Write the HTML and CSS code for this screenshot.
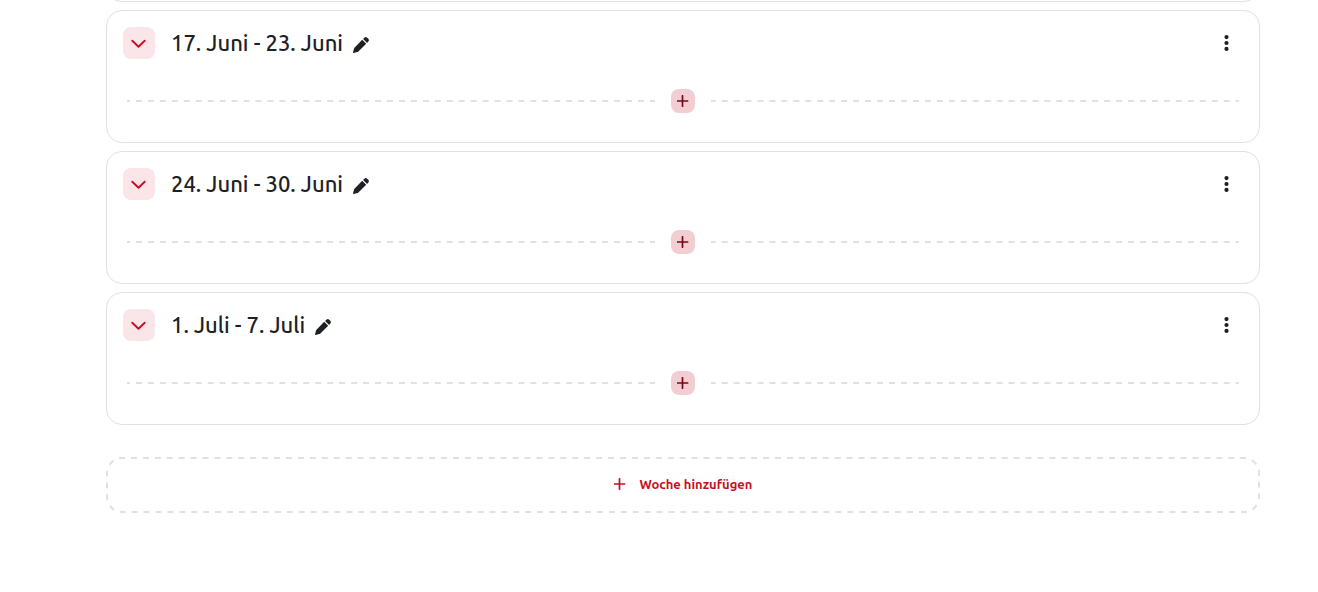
FILE: index.html
```html
<!DOCTYPE html>
<html lang="de">
<head>
    <meta charset="UTF-8">
    <meta name="viewport" content="width=device-width, initial-scale=1.0">
    <title>Kurs bearbeiten</title>
    <link rel="stylesheet" href="styles.css">
</head>
<body>
<svg class="icon-defs" aria-hidden="true">
    <symbol id="icon-chevron" viewBox="0 0 16 16">
        <path d="M1.3 5.7L7.5 11.7L13.7 5.7" fill="none" stroke="currentColor" stroke-width="1.9" stroke-linecap="round" stroke-linejoin="round"/>
    </symbol>
    <symbol id="icon-pencil" viewBox="0 0 16 16">
        <path d="M9.2 2.8L13.2 6.8L5.4 14.4Q4.9 14.9 4.2 15.1L.7 16Q0 16 0 15.3L1 11.8Q1.2 11.1 1.7 10.6Z" fill="currentColor"/>
        <path d="M10.1 1.9L11.4 .7Q12.8-.5 14.2 .7L15.3 1.8Q16.5 3.2 15.3 4.6L14.1 5.9Z" fill="currentColor"/>
    </symbol>
    <symbol id="icon-dots" viewBox="0 0 16 16">
        <circle cx="7.5" cy="2.1" r="2.1" fill="currentColor"/>
        <circle cx="7.5" cy="8" r="2.1" fill="currentColor"/>
        <circle cx="7.5" cy="13.9" r="2.1" fill="currentColor"/>
    </symbol>
    <symbol id="icon-plus" viewBox="0 0 12 12">
        <path d="M5.5 .8V11.2M.6 6H10.6" fill="none" stroke="currentColor" stroke-width="1.7" stroke-linecap="round"/>
    </symbol>
</svg>

<main class="course">
    <section class="section previous" aria-label="Vorherige Woche"></section>

    <section class="section">
        <header class="section-header">
            <button class="toggle" type="button" aria-label="Einklappen"><svg class="icon"><use href="#icon-chevron"/></svg></button>
            <h3 class="title">17. Juni - 23. Juni</h3>
            <button class="edit" type="button" aria-label="Bearbeiten"><svg class="icon"><use href="#icon-pencil"/></svg></button>
            <button class="menu" type="button" aria-label="Aktionen"><svg class="icon"><use href="#icon-dots"/></svg></button>
        </header>
        <div class="divider">
            <span class="divider-content">
                <button class="insert" type="button" aria-label="Inhalt einfügen"><svg class="icon-plus"><use href="#icon-plus"/></svg></button>
            </span>
        </div>
    </section>

    <section class="section">
        <header class="section-header">
            <button class="toggle" type="button" aria-label="Einklappen"><svg class="icon"><use href="#icon-chevron"/></svg></button>
            <h3 class="title">24. Juni - 30. Juni</h3>
            <button class="edit" type="button" aria-label="Bearbeiten"><svg class="icon"><use href="#icon-pencil"/></svg></button>
            <button class="menu" type="button" aria-label="Aktionen"><svg class="icon"><use href="#icon-dots"/></svg></button>
        </header>
        <div class="divider">
            <span class="divider-content">
                <button class="insert" type="button" aria-label="Inhalt einfügen"><svg class="icon-plus"><use href="#icon-plus"/></svg></button>
            </span>
        </div>
    </section>

    <section class="section">
        <header class="section-header">
            <button class="toggle" type="button" aria-label="Einklappen"><svg class="icon"><use href="#icon-chevron"/></svg></button>
            <h3 class="title">1. Juli - 7. Juli</h3>
            <button class="edit" type="button" aria-label="Bearbeiten"><svg class="icon"><use href="#icon-pencil"/></svg></button>
            <button class="menu" type="button" aria-label="Aktionen"><svg class="icon"><use href="#icon-dots"/></svg></button>
        </header>
        <div class="divider">
            <span class="divider-content">
                <button class="insert" type="button" aria-label="Inhalt einfügen"><svg class="icon-plus"><use href="#icon-plus"/></svg></button>
            </span>
        </div>
    </section>

    <button class="add-week" type="button">
        <svg class="outline" aria-hidden="true"><rect x="1" y="1" rx="15" pathLength="2400"/></svg>
        <svg class="icon-plus"><use href="#icon-plus"/></svg>
        Woche hinzufügen
    </button>
</main>
</body>
</html>
```
FILE: styles.css
```css
* {
    margin: 0;
    padding: 0;
    box-sizing: border-box;
}
body {
    font-family: Ubuntu, 'Noto Sans', sans-serif;
    background: #ffffff;
    color: #1d2125;
}
button {
    font-family: inherit;
    border: none;
    background: none;
    color: inherit;
    cursor: pointer;
    display: flex;
    align-items: center;
    justify-content: center;
}
.icon-defs {
    display: none;
}
.icon {
    width: 16px;
    height: 16px;
}
.icon-plus {
    width: 12px;
    height: 12px;
}
.course {
    display: flow-root;
    padding: 0 58px 0 106px;
}
.section {
    border: 1px solid #dee2e6;
    border-radius: 16px;
    padding: 16px 16px 29px;
    margin-bottom: 8px;
}
/* only the lower edge of the week above stays in view */
.previous {
    margin-top: -45px;
}
.section-header {
    display: flex;
    align-items: center;
}
.toggle {
    width: 32px;
    height: 32px;
    border-radius: 8px;
    background: #fae6e9;
    color: #ca0c24;
    margin-right: 16px;
}
.title {
    font-size: 22px;
    font-weight: 500;
    line-height: 32px;
}
.edit {
    width: 32px;
    height: 32px;
    padding: 4px 0 0 4px;
}
.menu {
    width: 32px;
    height: 32px;
    margin-left: auto;
}
/* dashes are spread evenly, half a dash at each end */
.divider {
    display: flex;
    justify-content: center;
    margin: 30px 4px 0;
    background: linear-gradient(to right, #dee2e6 25%, transparent 25%, transparent 75%, #dee2e6 75%) left center / 12px 2px round no-repeat;
}
.divider-content {
    background: #ffffff;
    padding: 0 16px;
}
.insert {
    width: 24px;
    height: 24px;
    border-radius: 8px;
    background: #f2ced3;
    color: #79071a;
}
.add-week {
    position: relative;
    width: 100%;
    height: 56px;
    margin-top: 32px;
    padding-bottom: 2px;
    gap: 14px;
    color: #ca0c24;
    font-size: 13px;
    font-weight: 700;
}
.outline {
    position: absolute;
    top: 0;
    left: 0;
    width: 100%;
    height: 100%;
}
.outline rect {
    width: calc(100% - 2px);
    height: calc(100% - 2px);
    fill: none;
    stroke: #dee2e6;
    stroke-width: 2px;
    stroke-dasharray: 6 6;
    stroke-dashoffset: 3;
}
```
